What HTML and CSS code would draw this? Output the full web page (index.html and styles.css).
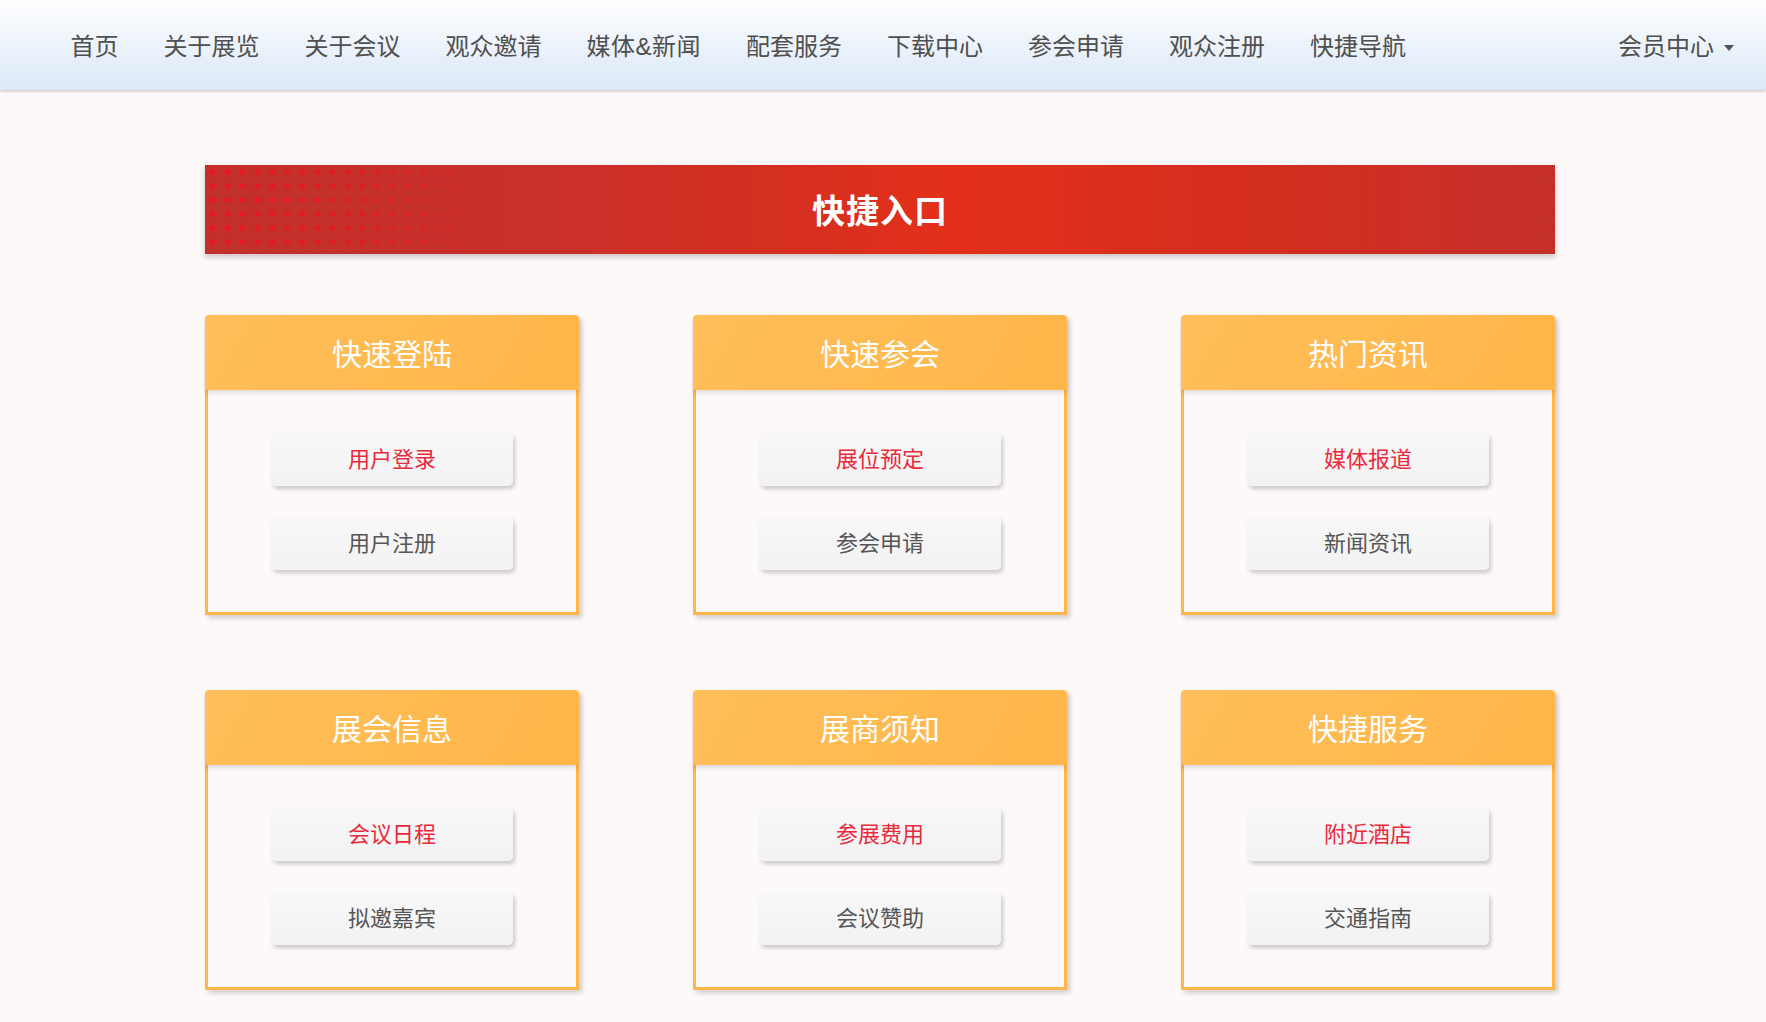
FILE: index.html
```html
<!DOCTYPE html>
<html lang="zh-CN">
<head>
    <meta charset="UTF-8">
    <meta name="viewport" content="width=device-width, initial-scale=1.0">
    <title>快捷入口</title>
    <link rel="stylesheet" href="styles.css">
</head>
<body>
    <div class="topnav">
        <ul class="nav-list">
            <li><a href="#">首页</a></li>
            <li><a href="#">关于展览</a></li>
            <li><a href="#">关于会议</a></li>
            <li><a href="#">观众邀请</a></li>
            <li><a href="#" class="wide">媒体&amp;新闻</a></li>
            <li><a href="#">配套服务</a></li>
            <li><a href="#">下载中心</a></li>
            <li><a href="#">参会申请</a></li>
            <li><a href="#">观众注册</a></li>
            <li><a href="#">快捷导航</a></li>
        </ul>
        <a href="#" class="member">会员中心<span class="caret"></span></a>
    </div>

    <div class="main">
        <div class="banner">
            <h2>快捷入口</h2>
        </div>

        <div class="entry-grid">
            <div class="entry-card">
                <div class="entry-head">快速登陆</div>
                <div class="entry-body">
                    <a href="#" class="entry-btn hot">用户登录</a>
                    <a href="#" class="entry-btn">用户注册</a>
                </div>
            </div>
            <div class="entry-card">
                <div class="entry-head">快速参会</div>
                <div class="entry-body">
                    <a href="#" class="entry-btn hot">展位预定</a>
                    <a href="#" class="entry-btn">参会申请</a>
                </div>
            </div>
            <div class="entry-card">
                <div class="entry-head">热门资讯</div>
                <div class="entry-body">
                    <a href="#" class="entry-btn hot">媒体报道</a>
                    <a href="#" class="entry-btn">新闻资讯</a>
                </div>
            </div>
            <div class="entry-card">
                <div class="entry-head">展会信息</div>
                <div class="entry-body">
                    <a href="#" class="entry-btn hot">会议日程</a>
                    <a href="#" class="entry-btn">拟邀嘉宾</a>
                </div>
            </div>
            <div class="entry-card">
                <div class="entry-head">展商须知</div>
                <div class="entry-body">
                    <a href="#" class="entry-btn hot">参展费用</a>
                    <a href="#" class="entry-btn">会议赞助</a>
                </div>
            </div>
            <div class="entry-card">
                <div class="entry-head">快捷服务</div>
                <div class="entry-body">
                    <a href="#" class="entry-btn hot">附近酒店</a>
                    <a href="#" class="entry-btn">交通指南</a>
                </div>
            </div>
        </div>
    </div>
</body>
</html>
```

FILE: styles.css
```css
body {
    margin: 0;
    font-family: 'Liberation Sans', 'Noto Sans CJK SC', sans-serif;
    background: #fdf9f8;
}
a {
    text-decoration: none;
}
.topnav {
    height: 90px;
    display: flex;
    align-items: center;
    justify-content: space-between;
    background: linear-gradient(to bottom, #ffffff 0%, #eef4fb 45%, #dbe8f6 100%);
    box-shadow: 0 1px 3px rgba(0,0,0,0.25);
    padding: 4px 32px 0 48px;
    box-sizing: border-box;
}
.nav-list {
    list-style: none;
    margin: 0;
    padding: 0;
    display: flex;
}
.nav-list a {
    display: block;
    padding: 0 22.5px;
    font-size: 24px;
    line-height: 30px;
    color: #4f4f4f;
}
.nav-list a.wide {
    letter-spacing: 0.5px;
}
.member {
    font-size: 24px;
    line-height: 30px;
    color: #4f4f4f;
    display: flex;
    align-items: center;
}
.caret {
    display: inline-block;
    margin-left: 10px;
    margin-top: 2px;
    border-top: 6px solid #555;
    border-left: 5.5px solid transparent;
    border-right: 5.5px solid transparent;
}
.main {
    width: 1350px;
    margin: 75px 0 0 205px;
}
.banner {
    position: relative;
    height: 89px;
    display: flex;
    align-items: center;
    justify-content: center;
    overflow: hidden;
    background: linear-gradient(90deg, #c2302b 0%, #c9302a 25%, #d72f1f 45%, #e3301a 55%, #d42e1f 78%, #c5302a 100%);
    box-shadow: 0 3px 6px rgba(0,0,0,0.22);
}
.banner::before {
    content: '';
    position: absolute;
    left: 0;
    top: 0;
    bottom: 0;
    width: 300px;
    background-image: radial-gradient(circle, #ee1420 2.5px, transparent 3.5px);
    background-size: 15px 14px;
    -webkit-mask-image: linear-gradient(90deg, rgba(0,0,0,0.9) 0%, rgba(0,0,0,0.6) 50%, transparent 100%);
    mask-image: linear-gradient(90deg, rgba(0,0,0,0.9) 0%, rgba(0,0,0,0.6) 50%, transparent 100%);
}
.banner::after {
    content: '';
    position: absolute;
    right: 0;
    top: 0;
    bottom: 0;
    width: 40px;
    background-image: radial-gradient(circle, #d8161e 2px, transparent 3px);
    background-size: 15px 14px;
    opacity: 0.25;
}
.banner h2 {
    position: relative;
    margin: 4px 0 0;
    color: #fff;
    font-size: 33px;
    line-height: 40px;
    font-weight: bold;
    letter-spacing: 1px;
}
.entry-grid {
    display: grid;
    grid-template-columns: repeat(3, 374px);
    column-gap: 114px;
    row-gap: 75px;
    margin-top: 61px;
    padding-bottom: 40px;
}
.entry-card {
    box-shadow: 3px 3px 5px rgba(0,0,0,0.18);
    border-radius: 4px 4px 0 0;
}
.entry-head {
    position: relative;
    height: 75px;
    padding-top: 4px;
    box-sizing: border-box;
    line-height: 71px;
    text-align: center;
    font-size: 30px;
    color: #fff;
    background: linear-gradient(120deg, #ffbe5a 0%, #ffb648 100%);
    border-radius: 4px 4px 0 0;
    box-shadow: 0 3px 4px rgba(0,0,0,0.12);
}
.entry-body {
    border: 3px solid #ffb64b;
    border-top: none;
    padding: 43px 0 42px;
    display: flex;
    flex-direction: column;
    align-items: center;
    gap: 31px;
    background: #fdf9f8;
}
.entry-btn {
    display: block;
    width: 242px;
    height: 53px;
    line-height: 53px;
    text-align: center;
    font-size: 22px;
    color: #555;
    border-radius: 5px;
    background: linear-gradient(to bottom, #f9f8f8 0%, #f2f2f2 100%);
    box-shadow: 2px 3px 4px rgba(0,0,0,0.2);
}
.entry-btn.hot {
    color: #ea2a3c;
}
```
